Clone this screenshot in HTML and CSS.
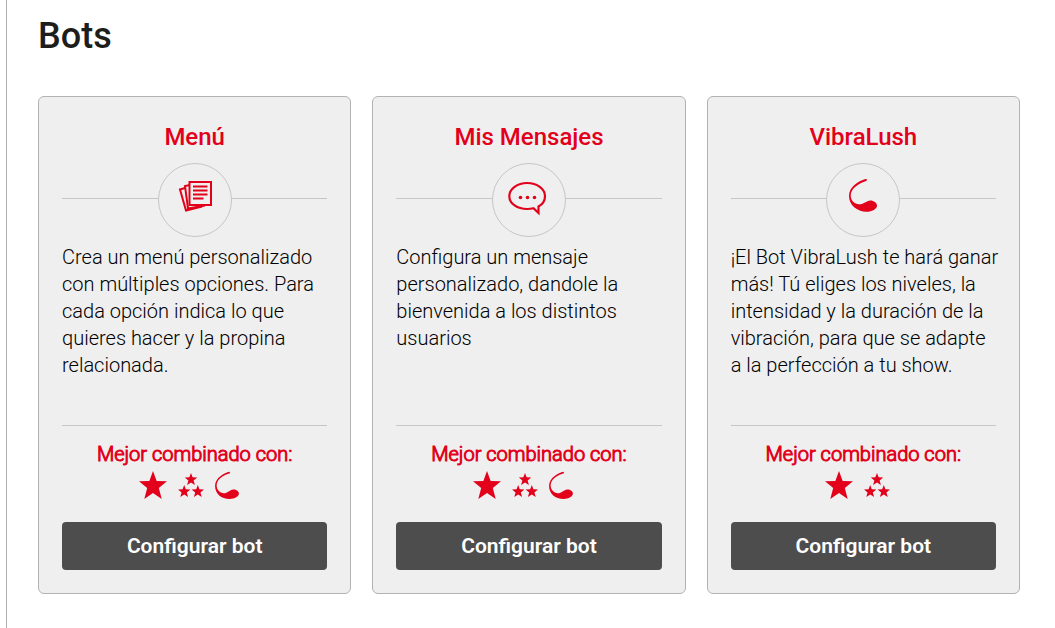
FILE: index.html
```
<!DOCTYPE html>
<html lang="es">
<head>
  <meta charset="UTF-8">
  <meta name="viewport" content="width=device-width, initial-scale=1.0">
  <title>Bots</title>
  <link rel="stylesheet" href="styles.css">
</head>
<body>
  <!-- Shared icons -->
  <svg class="sprite" aria-hidden="true">
    <symbol id="star" viewBox="0 0 27 27">
      <path d="M13.500 0l3.500 9.600 10 .4-7.900 6.300L21.900 27l-8.400-5.800L5.100 27l2.800-10.700L0 10l10-.4z"/>
    </symbol>
    <symbol id="stars" viewBox="0 0 26 27">
      <path id="mini" d="M13 1.500l1.600 4.300 4.600.2-3.600 2.900L16.900 13.500 13 10.900l-3.900 2.600 1.300-4.600L6.800 6l4.600-.2z"/>
      <use href="#mini" x="-6.800" y="12"/>
      <use href="#mini" x="6.800" y="12"/>
    </symbol>
    <symbol id="vibra" viewBox="0 0 23 27">
      <path d="M14 .8C9 1.800 0 6.500 0 14.500C0 22 6 27 14 27C19 27 23 24.500 23 21.500C23 19.500 20 17.500 17.500 17.800C14 18.300 12 21.500 8.500 21.500C4.500 21 1.500 18 1.500 14C1.500 8 8 3.800 14.500 2.200z"/>
    </symbol>
  </svg>

  <main class="content">
    <h1>Bots</h1>
    <div class="bots">
      <section class="bot-card">
        <h2>Menú</h2>
        <div class="bot-icon">
          <svg viewBox="1 1 72 72" aria-hidden="true">
            <g fill="none" stroke="#e2001a" stroke-width="2">
              <path d="M27 25l-5 1.500L28 47.500 44 43.500"/>
              <path d="M32 22l-5 1L30 45.500 47 42.500"/>
              <path fill="#efefef" d="M31.500 19h21.500v23H31.500z"/>
              <path d="M35 23.500h14.500M35 27.500h14.500M35 31.500h14.500M35 35.500h10.500"/>
            </g>
          </svg>
        </div>
        <p class="bot-text">Crea un menú personalizado con múltiples opciones. Para cada opción indica lo que quieres hacer y la propina relacionada.</p>
        <div class="combined">
          <h3>Mejor combinado con:</h3>
          <div class="combined-icons">
            <svg class="i-star"><use href="#star"/></svg>
            <svg class="i-stars"><use href="#stars"/></svg>
            <svg class="i-vibra"><use href="#vibra"/></svg>
          </div>
        </div>
        <button type="button" class="btn">Configurar bot</button>
      </section>

      <section class="bot-card">
        <h2>Mis Mensajes</h2>
        <div class="bot-icon">
          <svg viewBox="1 1 72 72" aria-hidden="true">
            <path fill="none" stroke="#e2001a" stroke-width="2.200" d="M46.500 43.500C51 41 53 37.500 53 33.200C53 25.700 45 20 35.200 20S17.300 25.700 17.300 33.200S25.400 46 35.200 46C37.500 46 39.500 45.700 41.500 45.200L46.500 50z"/>
            <circle cx="28.500" cy="34.500" r="1.800"/>
            <circle cx="35.500" cy="34.500" r="1.800"/>
            <circle cx="42.500" cy="34.500" r="1.800"/>
          </svg>
        </div>
        <p class="bot-text">Configura un mensaje personalizado, dandole la bienvenida a los distintos usuarios</p>
        <div class="combined">
          <h3>Mejor combinado con:</h3>
          <div class="combined-icons">
            <svg class="i-star"><use href="#star"/></svg>
            <svg class="i-stars"><use href="#stars"/></svg>
            <svg class="i-vibra"><use href="#vibra"/></svg>
          </div>
        </div>
        <button type="button" class="btn">Configurar bot</button>
      </section>

      <section class="bot-card">
        <h2>VibraLush</h2>
        <div class="bot-icon">
          <svg viewBox="1 1 72 72" aria-hidden="true">
            <path d="M39.500 16C32 18 23 24 23 33C23 42 31 48.700 40.500 48.700C46 48.700 51 46 51 42.700C51 40 47.500 37.500 44.500 37.500C40 38 37.500 41.500 33 41.300C28.500 41 24.700 37.500 24.700 32.500C24.700 25.500 32.500 20.500 39.500 18.200C41.700 17.500 41 15.600 39.500 16z"/>
          </svg>
        </div>
        <p class="bot-text">¡El Bot VibraLush te hará ganar más! Tú eliges los niveles, la intensidad y la duración de la vibración, para que se adapte a la perfección a tu show.</p>
        <div class="combined">
          <h3>Mejor combinado con:</h3>
          <div class="combined-icons">
            <svg class="i-star"><use href="#star"/></svg>
            <svg class="i-stars"><use href="#stars"/></svg>
          </div>
        </div>
        <button type="button" class="btn">Configurar bot</button>
      </section>
    </div>
  </main>
</body>
</html>
```
FILE: styles.css
```
* {
  box-sizing: border-box;
}
body {
  margin: 0;
  font-family: Roboto, sans-serif;
  font-size: 20px;
  line-height: 27px;
  color: #1d1d1b;
  background: #fff;
}
h1, h2, h3, p {
  margin: 0;
}
.sprite {
  position: absolute;
  width: 0;
  height: 0;
}
.content {
  min-height: 100vh;
  margin-left: 6px;
  padding: 14px 35px 34px 31px;
  border-left: 1px solid #b2b2b2;
}
h1 {
  margin-bottom: 38px;
  font-size: 36px;
  line-height: 44px;
  font-weight: 500;
}
.bots {
  display: grid;
  grid-template-columns: repeat(3, 1fr);
  gap: 21px;
}
.bot-card {
  display: flex;
  flex-direction: column;
  padding: 23px;
  background: #efefef;
  border: 1px solid #b2b2b2;
  border-radius: 6px;
}
.bot-card h2 {
  margin-bottom: 9px;
  font-size: 24px;
  line-height: 34px;
  font-weight: 500;
  text-align: center;
  color: #e2001a;
}
.bot-icon {
  display: flex;
  align-items: center;
  margin-bottom: 7px;
}
.bot-icon::before,
.bot-icon::after {
  content: "";
  flex: 1;
  height: 1px;
  margin-bottom: 3px;
  background: #c6c6c6;
}
.bot-icon svg {
  width: 74px;
  height: 74px;
  border: 1px solid #c6c6c6;
  border-radius: 50%;
  fill: #e2001a;
}
.bot-text {
  flex: 1;
  min-height: 181px;
  margin-right: -4px;
  font-weight: 300;
  color: #000;
}
.combined {
  padding: 15px 0 23px;
  border-top: 1px solid #c6c6c6;
  text-align: center;
}
.combined h3 {
  margin-bottom: 3px;
  font-size: 20px;
  line-height: 27px;
  font-weight: 300;
  -webkit-text-stroke: 1px #e2001a;
  color: #e2001a;
}
.combined-icons {
  display: flex;
  justify-content: center;
  fill: #e2001a;
}
.combined-icons svg {
  height: 28px;
  margin-right: 11px;
}
.i-star {
  width: 28px;
}
.i-stars {
  width: 26px;
}
.i-vibra {
  width: 24px;
}
.btn {
  height: 48px;
  font-family: inherit;
  font-size: 21px;
  font-weight: 600;
  color: #fff;
  background: #4d4d4d;
  border: none;
  border-radius: 4px;
  cursor: pointer;
}
```
